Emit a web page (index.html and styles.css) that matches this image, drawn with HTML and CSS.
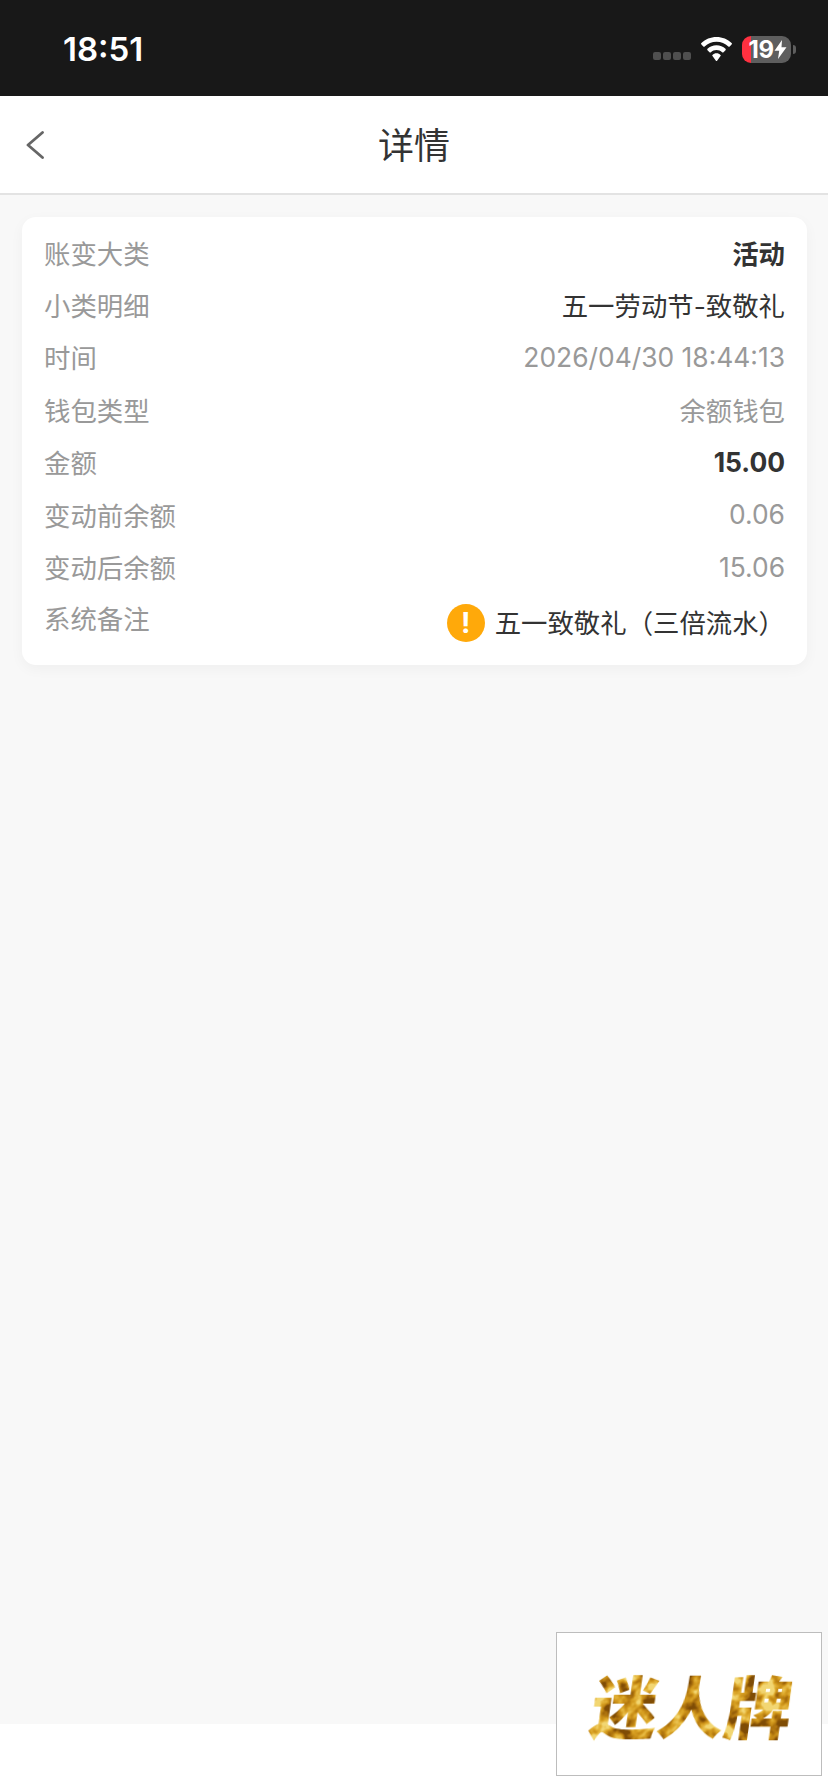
FILE: index.html
```html
<!DOCTYPE html>
<html lang="zh-CN">

<head>
    <meta charset="UTF-8">
    <meta name="viewport" content="width=device-width, initial-scale=1.0">
    <title>详情</title>
    <link rel="stylesheet" href="styles.css">
</head>

<body>
    <div class="page">
        <!-- 状态栏 -->
        <div class="status-bar">
            <span class="status-time">18:51</span>
            <div class="status-icons">
                <div class="signal-dots"><i></i><i></i><i></i><i></i></div>
                <svg class="wifi" width="31" height="24" viewBox="0 0 31 24">
                    <path d="M15.5 0C9.6 0 4.3 2.3 0.4 6.1a1 1 0 0 0 0 1.4l1.9 2a1 1 0 0 0 1.4 0C6.8 6.5 10.9 4.7 15.5 4.7s8.700 1.800 11.800 4.800a1 1 0 0 0 1.400 0l1.900-2a1 1 0 0 0 0-1.400C26.700 2.300 21.400 0 15.500 0z" fill="#fff"/>
                    <path d="M15.500 8.200c-3.500 0-6.700 1.400-9 3.600a1 1 0 0 0 0 1.400l2 2a1 1 0 0 0 1.400 0c1.500-1.300 3.400-2.100 5.600-2.100s4.100 0.800 5.600 2.100a1 1 0 0 0 1.400 0l2-2a1 1 0 0 0 0-1.400c-2.300-2.200-5.500-3.600-9-3.600z" fill="#fff"/>
                    <path d="M15.500 16.300c-1.600 0-3 0.600-4 1.600a0.800 0.800 0 0 0 0 1.100l3.400 4.700a0.800 0.800 0 0 0 1.200 0l3.400-4.700a0.800 0.800 0 0 0 0-1.100c-1-1-2.400-1.600-4-1.600z" fill="#fff"/>
                </svg>
                <div class="battery">
                    <div class="battery-body">
                        <span class="battery-num">19</span>
                        <svg class="bolt" width="13" height="19" viewBox="0 0 13 19">
                            <path d="M8 0L0.500 10.800h4.700L4 19l8.500-11.800H7.500z" fill="#fff"/>
                        </svg>
                    </div>
                    <div class="battery-cap"></div>
                </div>
            </div>
        </div>

        <!-- 导航栏 -->
        <div class="nav-bar">
            <svg class="back-icon" width="18" height="28" viewBox="0 0 18 28">
                <path d="M16.500 1.500L2 14l14.500 12.500" fill="none" stroke="#666" stroke-width="2.800" stroke-linecap="round" stroke-linejoin="round"/>
            </svg>
            <h1 class="nav-title">详情</h1>
        </div>

        <!-- 详情卡片 -->
        <div class="content">
            <div class="card">
                <div class="row">
                    <span class="label">账变大类</span>
                    <span class="value strong">活动</span>
                </div>
                <div class="row">
                    <span class="label">小类明细</span>
                    <span class="value dark">五一劳动节-致敬礼</span>
                </div>
                <div class="row">
                    <span class="label">时间</span>
                    <span class="value">2026/04/30 18:44:13</span>
                </div>
                <div class="row">
                    <span class="label">钱包类型</span>
                    <span class="value">余额钱包</span>
                </div>
                <div class="row">
                    <span class="label">金额</span>
                    <span class="value strong">15.00</span>
                </div>
                <div class="row">
                    <span class="label">变动前余额</span>
                    <span class="value">0.06</span>
                </div>
                <div class="row">
                    <span class="label">变动后余额</span>
                    <span class="value">15.06</span>
                </div>
                <div class="row row-note">
                    <span class="label">系统备注</span>
                    <div class="note">
                        <span class="note-icon">!</span>
                        <span class="value dark note-text">五一致敬礼（三倍流水）</span>
                    </div>
                </div>
            </div>
        </div>

        <div class="footer"></div>

        <!-- 浮动品牌图 -->
        <div class="brand-box">
            <span class="brand-text">迷人牌</span>
        </div>

        <!-- 金色纹理滤镜 -->
        <svg class="filter-defs" width="0" height="0">
            <filter id="goldTexture" x="0" y="0" width="100%" height="100%" color-interpolation-filters="sRGB">
                <feTurbulence type="fractalNoise" baseFrequency="0.06" numOctaves="3" seed="7"/>
                <feColorMatrix type="matrix" values="3 0 0 0 -1  3 0 0 0 -1  3 0 0 0 -1  0 0 0 0 1"/>
                <feComponentTransfer>
                    <feFuncR type="table" tableValues="0.50 0.66 0.76 0.84 0.90 0.95"/>
                    <feFuncG type="table" tableValues="0.30 0.43 0.53 0.62 0.72 0.84"/>
                    <feFuncB type="table" tableValues="0.02 0.05 0.08 0.13 0.25 0.45"/>
                </feComponentTransfer>
                <feComposite in2="SourceGraphic" operator="in"/>
            </filter>
        </svg>
    </div>
</body>

</html>
```

FILE: styles.css
```css
/* 基本样式和布局 */
* {
    box-sizing: border-box;
}

body {
    margin: 0;
    font-family: Inter, "Noto Sans CJK SC", sans-serif;
    background-color: #ffffff;
}

.page {
    position: relative;
    display: flex;
    flex-direction: column;
    width: 828px;
    height: 1792px;
    overflow: hidden;
}

/* 状态栏 */
.status-bar {
    display: flex;
    align-items: center;
    justify-content: space-between;
    height: 96px;
    padding: 0 32px 0 63px;
    background-color: #181818;
    color: #ffffff;
}

.status-time {
    font-size: 33px;
    font-weight: 600;
    margin-top: 2px;
}

.status-icons {
    display: flex;
    align-items: center;
    margin-top: 2px;
}

.signal-dots {
    display: flex;
    gap: 2px;
    margin-top: 14px;
    margin-right: 10px;
}

.signal-dots i {
    width: 8px;
    height: 8px;
    border-radius: 2px;
    background-color: #4f4f4f;
}

.wifi {
    display: block;
    margin-right: 10px;
}

.battery {
    display: flex;
    align-items: center;
}

.battery-body {
    display: flex;
    align-items: center;
    justify-content: center;
    gap: 1px;
    width: 49px;
    height: 27px;
    padding-left: 3px;
    border-radius: 9px;
    background: linear-gradient(90deg, #ff3040 9px, #5e5e5e 9px);
}

.battery-num {
    font-size: 24px;
    font-weight: 700;
    line-height: 27px;
    letter-spacing: -0.5px;
}

.bolt {
    display: block;
}

.battery-cap {
    width: 3px;
    height: 9px;
    margin-left: 2px;
    border-radius: 0 3px 3px 0;
    background-color: #5e5e5e;
}

/* 导航栏 */
.nav-bar {
    position: relative;
    display: flex;
    align-items: center;
    justify-content: center;
    height: 99px;
    padding-bottom: 4px;
    background-color: #ffffff;
    border-bottom: 2px solid #e3e3e3;
}

.back-icon {
    position: absolute;
    left: 26px;
    top: 35px;
}

.nav-title {
    margin: 0;
    font-size: 36px;
    font-weight: 400;
    color: #333333;
}

/* 内容区 */
.content {
    flex: 1;
    padding: 22px 21px 0 22px;
    background-color: #f8f8f8;
}

.card {
    padding: 9px 22px 20px;
    border-radius: 14px;
    background-color: #ffffff;
    box-shadow: 0 4px 14px rgba(0, 0, 0, 0.04);
}

.row {
    display: flex;
    align-items: center;
    justify-content: space-between;
    height: 52.4px;
    font-size: 26.4px;
}

.label {
    color: #999999;
}

.value {
    color: #999999;
}

.value.dark {
    color: #333333;
}

.value.strong {
    color: #333333;
    font-weight: 700;
}

.row-note {
    align-items: flex-start;
    height: auto;
    padding-top: 5px;
}

.note {
    display: flex;
    align-items: center;
    gap: 10px;
    margin-top: 4px;
}

.note-text {
    margin-bottom: 4px;
}

.note-icon {
    display: flex;
    align-items: center;
    justify-content: center;
    width: 38px;
    height: 38px;
    border-radius: 50%;
    background-color: #ffa90a;
    color: #ffffff;
    font-size: 28px;
    font-weight: 700;
}

/* 底部白色区域 */
.footer {
    height: 68px;
    background-color: #ffffff;
}

/* 浮动品牌图 */
.brand-box {
    position: absolute;
    left: 556px;
    top: 1632px;
    display: flex;
    align-items: center;
    justify-content: center;
    width: 266px;
    height: 144px;
    padding-left: 6px;
    border: 1px solid #bdbdbd;
    background-color: #ffffff;
}

.brand-text {
    font-family: "Noto Sans CJK SC", sans-serif;
    font-size: 67px;
    font-weight: 900;
    line-height: 72px;
    transform: skewX(-8deg);
    color: #c8961f;
    filter: url(#goldTexture);
}

.filter-defs {
    position: absolute;
}
```
